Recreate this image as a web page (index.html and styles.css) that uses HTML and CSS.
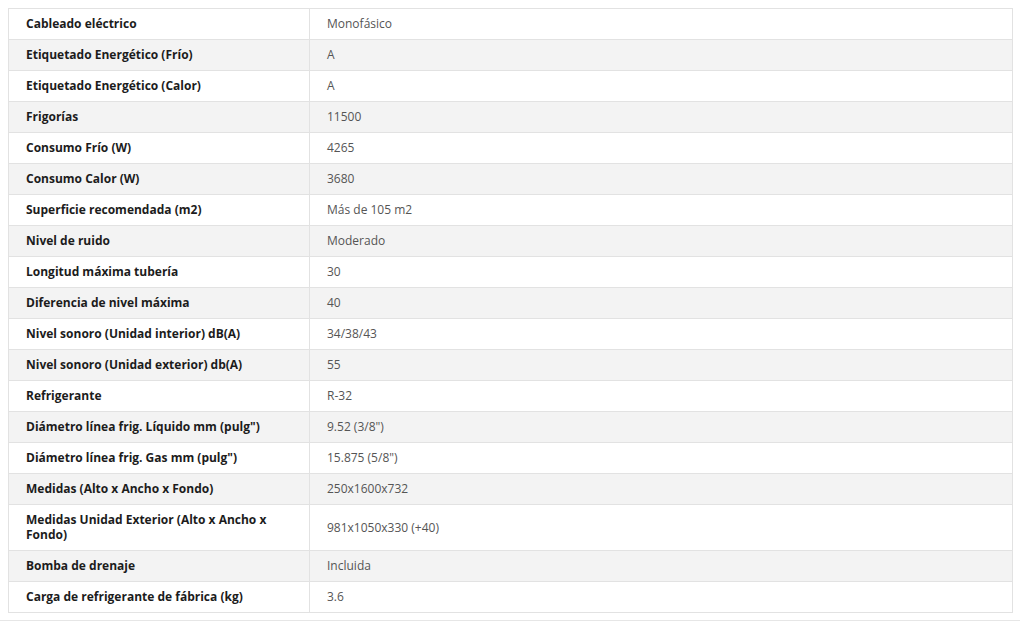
FILE: index.html
```html
<!DOCTYPE html>
<html lang="es">
<head>
<meta charset="utf-8">
<link rel="stylesheet" href="styles.css">
</head>
<body>
<div class="wrap">
<table class="specs">
<tbody>
<tr><th>Cableado eléctrico</th><td>Monofásico</td></tr>
<tr><th>Etiquetado Energético (Frío)</th><td>A</td></tr>
<tr><th>Etiquetado Energético (Calor)</th><td>A</td></tr>
<tr><th>Frigorías</th><td>11500</td></tr>
<tr><th>Consumo Frío (W)</th><td>4265</td></tr>
<tr><th>Consumo Calor (W)</th><td>3680</td></tr>
<tr><th>Superficie recomendada (m2)</th><td>Más de 105 m2</td></tr>
<tr><th>Nivel de ruido</th><td>Moderado</td></tr>
<tr><th>Longitud máxima tubería</th><td>30</td></tr>
<tr><th>Diferencia de nivel máxima</th><td>40</td></tr>
<tr><th>Nivel sonoro (Unidad interior) dB(A)</th><td>34/38/43</td></tr>
<tr><th>Nivel sonoro (Unidad exterior) db(A)</th><td>55</td></tr>
<tr><th>Refrigerante</th><td>R-32</td></tr>
<tr><th>Diámetro línea frig. Líquido mm (pulg")</th><td>9.52 (3/8")</td></tr>
<tr><th>Diámetro línea frig. Gas mm (pulg")</th><td>15.875 (5/8")</td></tr>
<tr><th>Medidas (Alto x Ancho x Fondo)</th><td>250x1600x732</td></tr>
<tr><th>Medidas Unidad Exterior (Alto x Ancho x Fondo)</th><td>981x1050x330 (+40)</td></tr>
<tr><th>Bomba de drenaje</th><td>Incluida</td></tr>
<tr><th>Carga de refrigerante de fábrica (kg)</th><td>3.6</td></tr>
</tbody>
</table>
</div>
<div class="rule"></div>
</body>
</html>
```
FILE: styles.css
```css
html, body { margin: 0; padding: 0; background: #fff; }
body { font-family: "Open Sans", "DejaVu Sans", sans-serif; }
.wrap { padding: 8px 11px 0 8px; }
.specs { width: 100%; border-collapse: collapse; border: 1px solid #e4e4e4; table-layout: fixed; }
.specs th, .specs td { border: 1px solid #e2e2e2; padding: 7px 17px 8px; font-size: 12px; line-height: 15px; text-align: left; vertical-align: middle; }
.specs th { width: 266px; font-weight: 700; color: #1c1c1c; }
.specs td { font-weight: 400; color: #555; }
.specs tr:nth-child(even) { background: #f3f3f3; }
.rule { margin-top: 7px; height: 1px; background: #e6e6e6; width: 1020px; }
```
